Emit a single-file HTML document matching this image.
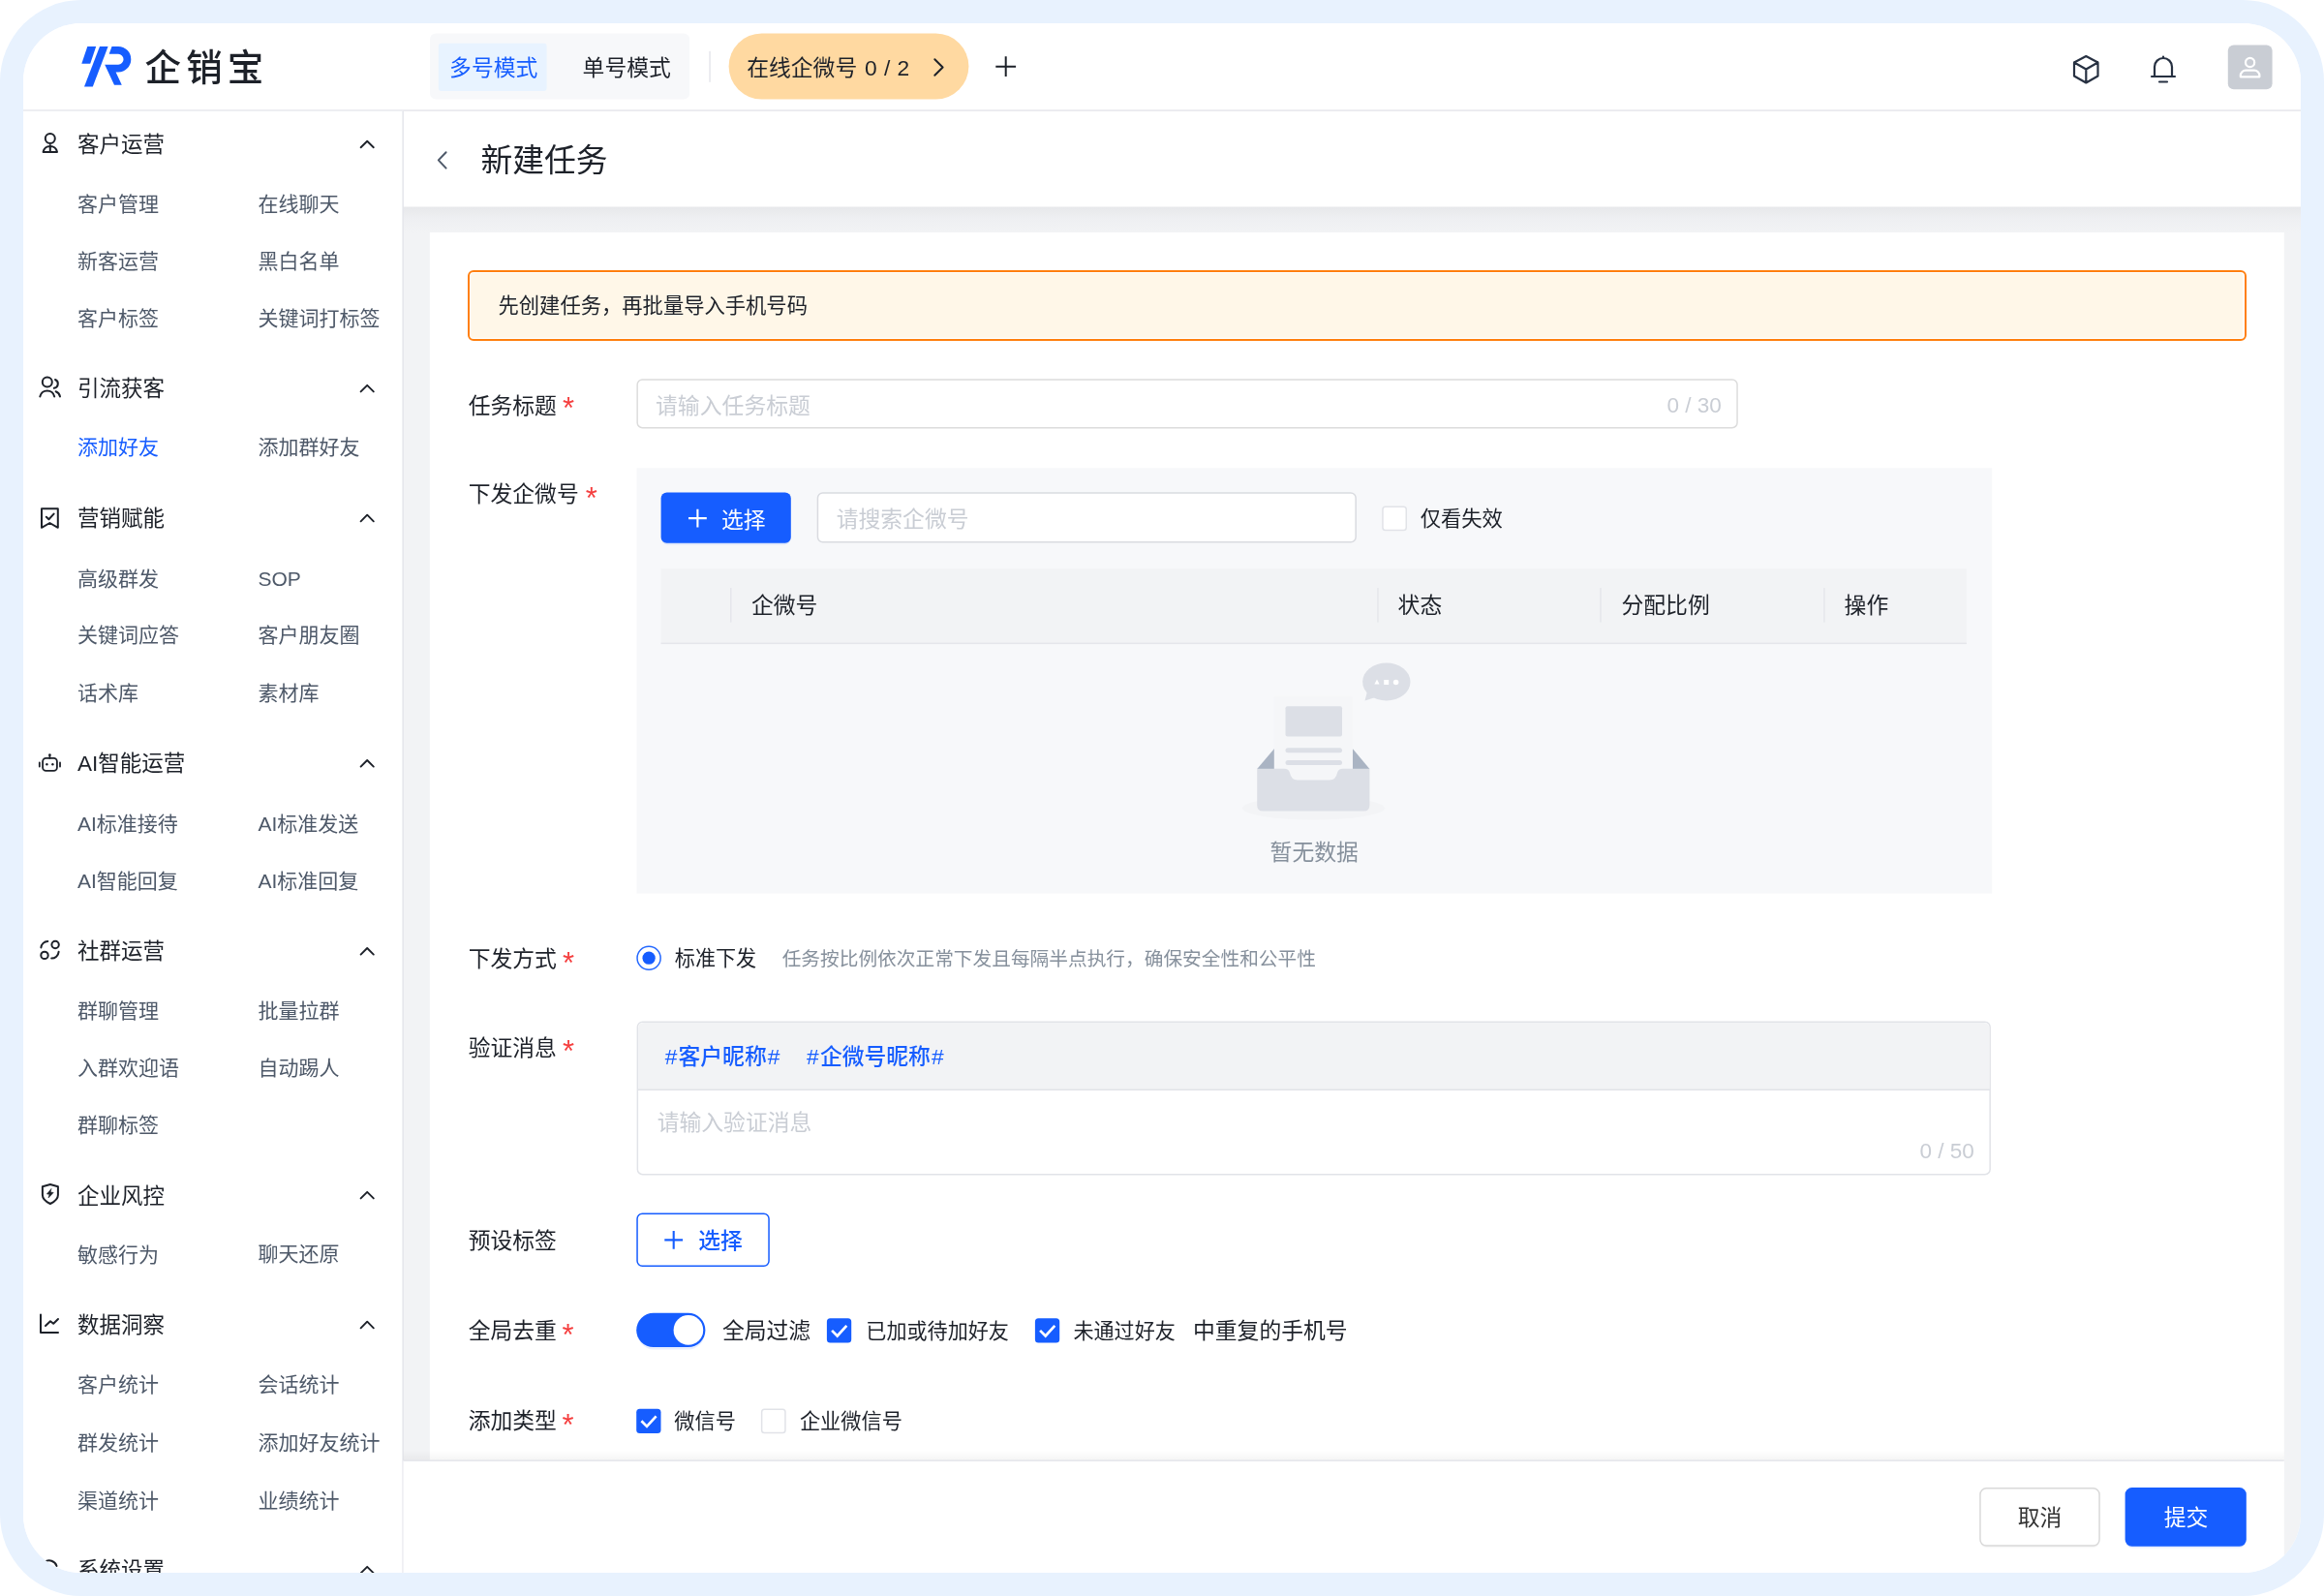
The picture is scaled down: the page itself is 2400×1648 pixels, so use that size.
<!DOCTYPE html><html lang="zh-CN"><head><meta charset="utf-8"><title>新建任务 - 企销宝</title><style>
*{box-sizing:border-box;margin:0;padding:0}
html,body{width:2400px;height:1648px;background:#fff;overflow:hidden}
body{font-family:"Liberation Sans","Noto Sans CJK SC",sans-serif;position:relative}
.outer{position:absolute;left:0;top:0;width:2400px;height:1648px;background:#e8f2fe;border-radius:84px}
.panel{position:absolute;left:24px;top:24px;width:2352px;height:1600px;background:#fff;border-radius:60px;overflow:hidden}
.pg{position:absolute;left:-24px;top:-24px;width:2400px;height:1648px;will-change:transform}
.t{position:absolute;height:40px;line-height:40px;white-space:nowrap}
svg{position:absolute;left:0;top:0}
.ic{fill:none;stroke:#1d2129;stroke-width:2;stroke-linecap:round;stroke-linejoin:round}
.h{display:inline-block;width:15px;text-align:center}
</style></head><body>
<div class="outer"></div><div class="panel"><div class="pg">
<svg width="2400" height="1648" viewBox="0 0 2400 1648">
<defs><linearGradient id="g1" x1="0" y1="0" x2="0" y2="1"><stop offset="0" stop-color="#e7e8ea"/><stop offset=".45" stop-color="#eeeff2"/><stop offset="1" stop-color="#f2f3f5"/></linearGradient><linearGradient id="g2" x1="0" y1="0" x2="0" y2="1"><stop offset="0" stop-color="#000" stop-opacity="0"/><stop offset="1" stop-color="#000" stop-opacity=".04"/></linearGradient></defs>
<rect x="416.00" y="114.00" width="1960.00" height="1510.00" fill="#f2f3f5"/>
<rect x="416.00" y="213.00" width="1960.00" height="28.00" fill="url(#g1)"/>
<rect x="416.00" y="114.00" width="1960.00" height="99.50" fill="#fff"/>
<rect x="443.80" y="240.00" width="1915.00" height="1290.00" fill="#fff"/>
<rect x="24.00" y="24.00" width="2352.00" height="90.00" fill="#fff"/>
<rect x="24.00" y="113.30" width="2352.00" height="1.50" fill="#e5e6eb"/>
<g fill="#165dff"><polygon points="90.3,48 99.2,48 93.2,65.7 84.3,65.7"/><polygon points="103,48 111.6,48 95.8,89.6 87,89.6"/><path d="M115.5 48 H122.1 A13.2 13.2 0 0 1 122.1 74.4 H119.6 L125.8 87.8 H118 L108.2 66.7 H122.1 A5.45 5.45 0 0 0 122.1 55.8 H112.7 Z"/></g>
<rect x="444.00" y="34.50" width="268.10" height="68.00" rx="6.00" fill="#f7f8fa"/>
<rect x="452.80" y="44.80" width="111.80" height="49.20" rx="3.00" fill="#e8f3ff"/>
<rect x="732.30" y="52.80" width="1.50" height="32.00" fill="#e5e6eb"/>
<rect x="752.60" y="34.50" width="247.80" height="68.00" rx="34.00" fill="#ffd9a1"/>
<path class="ic" d="M965.3 61.2 L973.6 69.5 L965.3 77.8"/>
<path class="ic" style="stroke-linecap:butt" d="M1038.7 58.3 V79.1 M1028.3 68.7 H1049.1"/>
<path class="ic" style="stroke:#273142;stroke-width:2.2" transform="translate(2140 56)" d="M14.3 2 L26.5 8.5 V22.5 L14.3 29.5 L2 22.5 V8.5 Z M2 8.5 L14.3 15.5 L26.5 8.5 M14.3 15.5 V29.5"/>
<path class="ic" style="stroke:#273142;stroke-width:2.2" transform="translate(2220 56)" d="M2 23 H26 M5 23 V13 A9 9 0 0 1 23 13 V23 M14 4 V2.5 M10 28.5 H18"/>
<rect x="2300.80" y="46.60" width="45.80" height="45.60" rx="6.00" fill="#c9cdd4"/>
<g fill="none" stroke="#fff" stroke-width="2.2" transform="translate(2301 46.5)"><circle cx="22.6" cy="18" r="4.6"/><path d="M12.8 32.8 V31.6 A5.4 5.4 0 0 1 18.2 26.2 H27 A5.4 5.4 0 0 1 32.4 31.6 V32.8 Z" stroke-linejoin="round"/></g>
<rect x="24.00" y="114.80" width="392.00" height="1510.00" fill="#fff"/>
<rect x="415.40" y="114.80" width="1.50" height="1510.00" fill="#e5e6eb"/>
<g class="ic"><circle cx="51.8" cy="143.1" r="5"/><path d="M44.6 157 A7.3 7.3 0 0 1 59 157 Z M51.8 150 V157"/><path d="M372.6 152.2 L379.2 145.7 L385.8 152.2" style="stroke-width:1.9"/><circle cx="48.8" cy="394.6" r="5"/><path d="M41.3 409.5 A7.6 7.6 0 0 1 56.2 409.5 M57 392 A4.6 4.6 0 0 1 55.8 400.8 M57.6 404.2 A7 7 0 0 1 62 409.5"/><path d="M372.6 404.4 L379.2 397.8 L385.8 404.4" style="stroke-width:1.9"/><path d="M43 525.2 H59.8 V544.8 L51.4 540 L43 544.8 Z M47.8 533.8 L50.4 536.2 L55.6 530.6"/><path d="M372.6 538.3 L379.2 531.7 L385.8 538.3" style="stroke-width:1.9"/><g style="stroke-width:1.8"><rect x="44.1" y="782.9" width="14.8" height="13" rx="3.4"/><path d="M51.4 782.9 V780.4"/><path d="M40.8 787.4 V791.6 M62 787.4 V791.6"/></g><g stroke="none" fill="#1d2129"><circle cx="51.4" cy="779.6" r="1.35"/><circle cx="48.4" cy="789.2" r="1.2"/><circle cx="54.4" cy="789.2" r="1.2"/></g><path d="M372.6 791.6 L379.2 785.0 L385.8 791.6" style="stroke-width:1.9"/><circle cx="57.1" cy="975.5" r="3.7"/><circle cx="46" cy="986.4" r="3.7"/><path d="M42.4 978.4 A7 7 0 0 1 49.3 972 M60.6 982.8 A7.4 7.4 0 0 1 53.2 989.6"/><path d="M372.6 985.6 L379.2 979.0 L385.8 985.6" style="stroke-width:1.9"/><path d="M51.9 1223 L59.9 1225.2 V1234 C59.9 1238 56.5 1240.8 51.9 1243 C47.3 1240.8 43.9 1238 43.9 1234 V1225.2 Z"/><polygon points="52.8,1227.7 48.4,1232.9 51.1,1233.2 50,1236.9 55.2,1231.4 52.3,1231.1" fill="#1d2129" style="stroke-width:.6"/><path d="M372.6 1237.4 L379.2 1230.8 L385.8 1237.4" style="stroke-width:1.9"/><path d="M42 1357.6 V1376 H60 M47 1369 L52 1364.2 L55.2 1366.8 L60 1362"/><path d="M372.6 1371.3 L379.2 1364.7 L385.8 1371.3" style="stroke-width:1.9"/><path d="M46 1613 A8 8 0 0 1 58.5 1617"/><path d="M372.6 1624.4 L379.2 1617.8 L385.8 1624.4" style="stroke-width:1.9"/></g>
<path class="ic" style="stroke:#4e5969" d="M460.6 157.2 L452.8 165.4 L460.6 173.6"/>
<rect x="484.00" y="280.00" width="1835.00" height="71.00" rx="5.00" fill="#fff" stroke="#ff7f0e" stroke-width="2"/>
<rect x="486.20" y="282.00" width="1830.00" height="66.70" rx="2.50" fill="#fff7e8"/>
<rect x="658.15" y="391.95" width="1135.90" height="49.70" rx="5.25" fill="#fff" stroke="#dcdcdc" stroke-width="1.5"/>
<rect x="657.50" y="483.30" width="1399.70" height="439.30" fill="#f7f8fa"/>
<rect x="683.20" y="510.50" width="133.00" height="52.00" rx="6.00" fill="rgba(22,93,255,.10)"/>
<rect x="682.60" y="508.50" width="134.20" height="52.30" rx="6.00" fill="#165dff"/>
<path d="M720.4 525.7 V544.5 M711 535.1 H729.8" fill="none" stroke="#fff" stroke-width="2.1"/>
<rect x="844.45" y="508.95" width="555.70" height="50.90" rx="5.25" fill="#fff" stroke="#d9dbe0" stroke-width="1.5"/>
<rect x="1427.95" y="523.15" width="24.30" height="24.40" rx="2.75" fill="#fff" stroke="#e1e3e8" stroke-width="1.5"/>
<rect x="682.60" y="587.20" width="1348.30" height="77.80" fill="#f2f3f5"/>
<rect x="682.60" y="663.60" width="1348.30" height="1.50" fill="#e5e6eb"/>
<rect x="754.00" y="607.00" width="1.50" height="35.60" fill="#e5e6eb"/>
<rect x="1422.20" y="607.00" width="1.50" height="35.60" fill="#e5e6eb"/>
<rect x="1652.20" y="607.00" width="1.50" height="35.60" fill="#e5e6eb"/>
<rect x="1883.20" y="607.00" width="1.50" height="35.60" fill="#e5e6eb"/>
<g><ellipse cx="1356.5" cy="834.5" rx="73.5" ry="12" fill="#f3f4f6"/><polygon points="1298.2,794 1316,794 1316,773" fill="#aab4c3"/><polygon points="1396.8,773 1396.8,794 1414.4,794" fill="#aab4c3"/><rect x="1315.8" y="718.8" width="81" height="92" rx="2" fill="#f5f6f8"/><rect x="1327.5" y="729.3" width="58.5" height="31.2" rx="2" fill="#dcdfe6"/><rect x="1327.5" y="772.3" width="58.5" height="5" rx="2.5" fill="#dcdfe6"/><rect x="1327.5" y="785" width="58.5" height="5" rx="2.5" fill="#dcdfe6"/><path d="M1298.2 793.7 H1326 Q1331 793.7 1332 798 Q1333.5 805.6 1340 805.6 H1373 Q1379.5 805.6 1381 798 Q1382 793.7 1387 793.7 H1414.4 V831.5 Q1414.4 837.5 1408.4 837.5 H1304.2 Q1298.2 837.5 1298.2 831.5 Z" fill="#dcdfe6"/><ellipse cx="1431.8" cy="704" rx="24.7" ry="19.5" fill="#dcdfe6"/><polygon points="1412.5,712 1409.5,723.5 1422,719.5" fill="#dcdfe6"/><polygon points="1422,701.5 1424.6,706.6 1419.4,706.6" fill="#fff"/><rect x="1429.2" y="702" width="5" height="5" fill="#fff"/><circle cx="1441.6" cy="704.5" r="2.8" fill="#fff"/></g>
<circle cx="670.1" cy="989.2" r="12.05" fill="#fff" stroke="#2468ff" stroke-width="1.5"/><circle cx="670.1" cy="989.2" r="6.65" fill="#165dff"/>
<rect x="658.35" y="1055.15" width="1396.80" height="157.50" rx="5.25" fill="#fff" stroke="#e1e3e8" stroke-width="1.5"/>
<path d="M659.1 1125.3 V1061.9 Q659.1 1055.9 665.1 1055.9 H2048.4 Q2054.4 1055.9 2054.4 1061.9 V1125.3 Z" fill="#f2f3f5"/>
<rect x="658.40" y="1124.50" width="1396.80" height="1.50" fill="#e1e3e8"/>
<rect x="658.05" y="1253.15" width="136.00" height="54.10" rx="5.25" fill="#fff" stroke="#165dff" stroke-width="1.5"/>
<path d="M695.7 1271 V1289.8 M686.3 1280.4 H705.1" fill="none" stroke="#165dff" stroke-width="2.1"/>
<rect x="658.00" y="1358.50" width="70.00" height="35.00" rx="17.50" fill="rgba(22,93,255,.10)"/>
<rect x="657.20" y="1355.70" width="71.20" height="35.40" rx="17.70" fill="#165dff"/>
<circle cx="710.9" cy="1373.4" r="15.3" fill="#fff"/>
<rect x="853.90" y="1361.30" width="25.30" height="25.30" rx="3.50" fill="#165dff"/>
<path d="M859.1 1373.9 L864.7 1379.5 L874.3 1368.9" fill="none" stroke="#fff" stroke-width="2.7"/>
<rect x="1068.90" y="1361.30" width="25.30" height="25.30" rx="3.50" fill="#165dff"/>
<path d="M1074.1 1373.9 L1079.7 1379.5 L1089.3 1368.9" fill="none" stroke="#fff" stroke-width="2.7"/>
<rect x="657.20" y="1454.70" width="25.30" height="25.30" rx="3.50" fill="#165dff"/>
<path d="M662.4 1467.3 L668.0 1472.9 L677.6 1462.3" fill="none" stroke="#fff" stroke-width="2.7"/>
<rect x="786.65" y="1455.15" width="24.30" height="24.40" rx="2.75" fill="#fff" stroke="#e1e3e8" stroke-width="1.5"/>
<rect x="416.50" y="1497.00" width="1942.30" height="11.00" fill="url(#g2)"/>
<rect x="416.50" y="1508.00" width="1942.30" height="117.00" fill="#fff"/>
<rect x="416.50" y="1507.40" width="1942.30" height="1.50" fill="#e5e6eb"/>
<rect x="2044.80" y="1538.00" width="123.40" height="60.20" rx="7.00" fill="rgba(0,0,0,.03)"/>
<rect x="2044.95" y="1536.85" width="123.10" height="59.20" rx="6.25" fill="#fff" stroke="#d9d9d9" stroke-width="1.5"/>
<rect x="2195.40" y="1538.40" width="123.60" height="60.20" rx="7.00" fill="rgba(22,93,255,.10)"/>
<rect x="2194.60" y="1536.10" width="125.20" height="60.70" rx="7.00" fill="#165dff"/>
</svg>
<div class="t" id="g0" style="left:80.0px;top:130px;font-size:22.5px;color:#1d2129;">客户运营</div>
<div class="t" id="g0r0a" style="left:80.0px;top:191px;font-size:21px;color:#4e5969;">客户管理</div>
<div class="t" id="g0r0b" style="left:266.4px;top:191px;font-size:21px;color:#4e5969;">在线聊天</div>
<div class="t" id="g0r1a" style="left:80.0px;top:250px;font-size:21px;color:#4e5969;">新客运营</div>
<div class="t" id="g0r1b" style="left:266.4px;top:250px;font-size:21px;color:#4e5969;">黑白名单</div>
<div class="t" id="g0r2a" style="left:80.0px;top:309px;font-size:21px;color:#4e5969;">客户标签</div>
<div class="t" id="g0r2b" style="left:266.4px;top:309px;font-size:21px;color:#4e5969;">关键词打标签</div>
<div class="t" id="g1" style="left:80.0px;top:382px;font-size:22.5px;color:#1d2129;">引流获客</div>
<div class="t" id="g1r0a" style="left:80.0px;top:442px;font-size:21px;color:#165dff;">添加好友</div>
<div class="t" id="g1r0b" style="left:266.4px;top:442px;font-size:21px;color:#4e5969;">添加群好友</div>
<div class="t" id="g2" style="left:80.0px;top:516px;font-size:22.5px;color:#1d2129;">营销赋能</div>
<div class="t" id="g2r0a" style="left:80.0px;top:578px;font-size:21px;color:#4e5969;">高级群发</div>
<div class="t" id="g2r0b" style="left:266.4px;top:578px;font-size:21px;color:#4e5969;">SOP</div>
<div class="t" id="g2r1a" style="left:80.0px;top:636px;font-size:21px;color:#4e5969;">关键词应答</div>
<div class="t" id="g2r1b" style="left:266.4px;top:636px;font-size:21px;color:#4e5969;">客户朋友圈</div>
<div class="t" id="g2r2a" style="left:80.0px;top:696px;font-size:21px;color:#4e5969;">话术库</div>
<div class="t" id="g2r2b" style="left:266.4px;top:696px;font-size:21px;color:#4e5969;">素材库</div>
<div class="t" id="g3" style="left:80.0px;top:769px;font-size:22.5px;color:#1d2129;">AI智能运营</div>
<div class="t" id="g3r0a" style="left:80.0px;top:831px;font-size:21px;color:#4e5969;">AI标准接待</div>
<div class="t" id="g3r0b" style="left:266.4px;top:831px;font-size:21px;color:#4e5969;">AI标准发送</div>
<div class="t" id="g3r1a" style="left:80.0px;top:890px;font-size:21px;color:#4e5969;">AI智能回复</div>
<div class="t" id="g3r1b" style="left:266.4px;top:890px;font-size:21px;color:#4e5969;">AI标准回复</div>
<div class="t" id="g4" style="left:80.0px;top:963px;font-size:22.5px;color:#1d2129;">社群运营</div>
<div class="t" id="g4r0a" style="left:80.0px;top:1024px;font-size:21px;color:#4e5969;">群聊管理</div>
<div class="t" id="g4r0b" style="left:266.4px;top:1024px;font-size:21px;color:#4e5969;">批量拉群</div>
<div class="t" id="g4r1a" style="left:80.0px;top:1083px;font-size:21px;color:#4e5969;">入群欢迎语</div>
<div class="t" id="g4r1b" style="left:266.4px;top:1083px;font-size:21px;color:#4e5969;">自动踢人</div>
<div class="t" id="g4r2a" style="left:80.0px;top:1142px;font-size:21px;color:#4e5969;">群聊标签</div>
<div class="t" id="g5" style="left:80.0px;top:1216px;font-size:22.5px;color:#1d2129;">企业风控</div>
<div class="t" id="g5r0a" style="left:80.0px;top:1276px;font-size:21px;color:#4e5969;">敏感行为</div>
<div class="t" id="g5r0b" style="left:266.4px;top:1275px;font-size:21px;color:#4e5969;">聊天还原</div>
<div class="t" id="g6" style="left:80.0px;top:1349px;font-size:22.5px;color:#1d2129;">数据洞察</div>
<div class="t" id="g6r0a" style="left:80.0px;top:1410px;font-size:21px;color:#4e5969;">客户统计</div>
<div class="t" id="g6r0b" style="left:266.4px;top:1410px;font-size:21px;color:#4e5969;">会话统计</div>
<div class="t" id="g6r1a" style="left:80.0px;top:1470px;font-size:21px;color:#4e5969;">群发统计</div>
<div class="t" id="g6r1b" style="left:266.4px;top:1470px;font-size:21px;color:#4e5969;">添加好友统计</div>
<div class="t" id="g6r2a" style="left:80.0px;top:1530px;font-size:21px;color:#4e5969;">渠道统计</div>
<div class="t" id="g6r2b" style="left:266.4px;top:1530px;font-size:21px;color:#4e5969;">业绩统计</div>
<div class="t" id="g7" style="left:80.0px;top:1602px;font-size:22.5px;color:#1d2129;">系统设置</div>
<div class="t" id="logo" style="left:149.6px;top:50px;font-size:37.5px;color:#1d2129;font-weight:500;letter-spacing:5.1px;height:60px;line-height:60px;margin-top:-10px">企销宝</div>
<div class="t" id="tab1" style="left:464.1px;top:50px;font-size:22.8px;color:#165dff;">多号模式</div>
<div class="t" id="tab2" style="left:601.6px;top:50px;font-size:22.8px;color:#1d2129;">单号模式</div>
<div class="t" id="pill" style="left:771.2px;top:50px;font-size:22.8px;color:#1d2129;">在线企微号 <span style="margin-left:1.6px;letter-spacing:.4px">0 / 2</span></div>
<div class="t" id="title" style="left:496.4px;top:146px;font-size:32.8px;color:#1d2129;height:50px;line-height:50px;margin-top:-5px">新建任务</div>
<div class="t" id="banner" style="left:514.5px;top:296px;font-size:21.3px;color:#1d2129;">先创建任务，再批量导入手机号码</div>
<div class="t" id="l1" style="left:483.7px;top:399px;font-size:22.8px;color:#1d2129;">任务标题</div>
<div class="t" id="l1s" style="left:581.1px;top:402px;font-size:31px;color:#f53f3f;">*</div>
<div class="t" id="ph1" style="left:677.0px;top:399px;font-size:22.85px;color:#c9cdd4;">请输入任务标题</div>
<div class="t" id="cnt1" style="left:1721.6px;top:399px;font-size:22.5px;color:#c9cdd4;">0 / 30</div>
<div class="t" id="l2" style="left:483.7px;top:490px;font-size:22.8px;color:#1d2129;">下发企微号</div>
<div class="t" id="l2s" style="left:604.7px;top:495px;font-size:31px;color:#f53f3f;">*</div>
<div class="t" id="btn1" style="left:745.0px;top:517px;font-size:22.8px;color:#fff;">选择</div>
<div class="t" id="ph2" style="left:863.7px;top:516px;font-size:22.8px;color:#c9cdd4;">请搜索企微号</div>
<div class="t" id="cb0" style="left:1466.7px;top:516px;font-size:21.3px;color:#1d2129;">仅看失效</div>
<div class="t" id="th1" style="left:776.0px;top:605px;font-size:22.8px;color:#1d2129;">企微号</div>
<div class="t" id="th2" style="left:1443.6px;top:605px;font-size:22.8px;color:#1d2129;">状态</div>
<div class="t" id="th3" style="left:1674.5px;top:605px;font-size:22.8px;color:#1d2129;">分配比例</div>
<div class="t" id="th4" style="left:1904.6px;top:605px;font-size:22.8px;color:#1d2129;">操作</div>
<div class="t" id="empty" style="left:1311.6px;top:860px;font-size:22.8px;color:#86909c;">暂无数据</div>
<div class="t" id="l3" style="left:483.7px;top:970px;font-size:22.8px;color:#1d2129;">下发方式</div>
<div class="t" id="l3s" style="left:581.1px;top:975px;font-size:31px;color:#f53f3f;">*</div>
<div class="t" id="rd" style="left:696.8px;top:970px;font-size:21.1px;color:#1d2129;">标准下发</div>
<div class="t" id="desc" style="left:807.7px;top:970px;font-size:19.7px;color:#86909c;">任务按比例依次正常下发且每隔半点执行，确保安全性和公平性</div>
<div class="t" id="l4" style="left:483.7px;top:1062px;font-size:22.8px;color:#1d2129;">验证消息</div>
<div class="t" id="l4s" style="left:581.0px;top:1066px;font-size:31px;color:#f53f3f;">*</div>
<div class="t" id="tag1" style="left:685.5px;top:1071px;font-size:22.8px;color:#165dff;font-weight:500;"><span class="h">#</span>客户昵称<span class="h">#</span></div>
<div class="t" id="tag2" style="left:831.9px;top:1071px;font-size:22.8px;color:#165dff;font-weight:500;"><span class="h">#</span>企微号昵称<span class="h">#</span></div>
<div class="t" id="ph3" style="left:678.7px;top:1139px;font-size:22.8px;color:#c9cdd4;">请输入验证消息</div>
<div class="t" id="cnt2" style="left:1982.6px;top:1169px;font-size:22.5px;color:#c9cdd4;">0 / 50</div>
<div class="t" id="l5" style="left:483.7px;top:1261px;font-size:22.8px;color:#1d2129;">预设标签</div>
<div class="t" id="btn2" style="left:721.2px;top:1261px;font-size:22.8px;color:#165dff;font-weight:500;">选择</div>
<div class="t" id="l6" style="left:483.7px;top:1354px;font-size:22.8px;color:#1d2129;">全局去重</div>
<div class="t" id="l6s" style="left:580.6px;top:1359px;font-size:31px;color:#f53f3f;">*</div>
<div class="t" id="sw" style="left:745.9px;top:1354px;font-size:22.8px;color:#1d2129;">全局过滤</div>
<div class="t" id="cb1" style="left:894.3px;top:1355px;font-size:21.1px;color:#1d2129;">已加或待加好友</div>
<div class="t" id="cb2" style="left:1108.4px;top:1355px;font-size:21.1px;color:#1d2129;">未通过好友</div>
<div class="t" id="tail" style="left:1232.0px;top:1354px;font-size:22.8px;color:#1d2129;">中重复的手机号</div>
<div class="t" id="l7" style="left:483.7px;top:1447px;font-size:22.8px;color:#1d2129;">添加类型</div>
<div class="t" id="l7s" style="left:580.6px;top:1452px;font-size:31px;color:#f53f3f;">*</div>
<div class="t" id="cb3" style="left:696.3px;top:1448px;font-size:21.2px;color:#1d2129;">微信号</div>
<div class="t" id="cb4" style="left:825.9px;top:1448px;font-size:21.2px;color:#1d2129;">企业微信号</div>
<div class="t" id="cancel" style="left:2083.8px;top:1547px;font-size:22.8px;color:#333;">取消</div>
<div class="t" id="submit" style="left:2234.8px;top:1547px;font-size:22.8px;color:#fff;">提交</div>
</div></div></body></html>
